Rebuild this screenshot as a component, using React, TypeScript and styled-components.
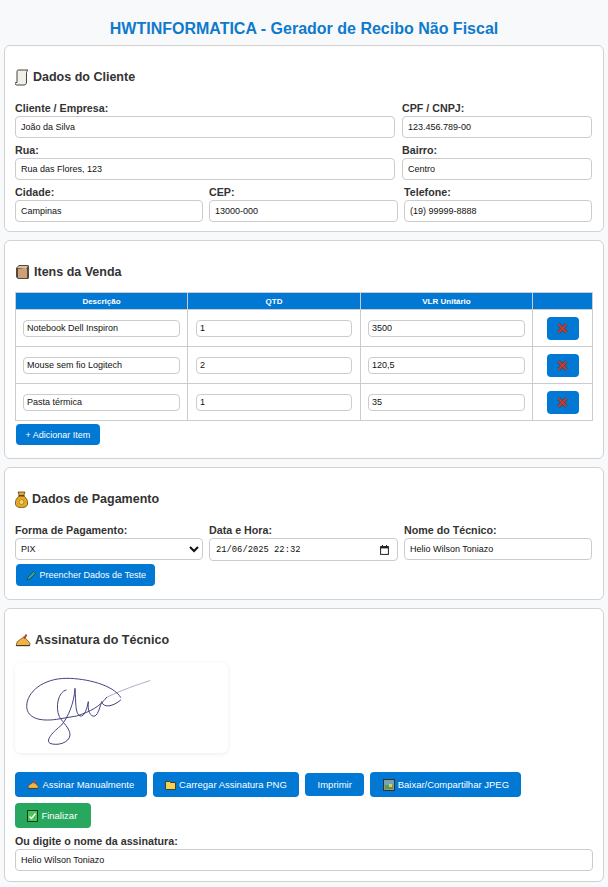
import React from 'react';
import styled, { createGlobalStyle } from 'styled-components';

const items = [
  { desc: 'Notebook Dell Inspiron', qtd: '1', valor: '3500' },
  { desc: 'Mouse sem fio Logitech', qtd: '2', valor: '120,5' },
  { desc: 'Pasta térmica', qtd: '1', valor: '35' },
];

const ScrollIcon = () => (
  <svg width="14" height="17" viewBox="0 0 14 17">
    <path d="M3 1h10c-1 1-1.500 2-1.500 3v9c0 2-1 3-2.500 3H1.500C.5 16 0 15 .5 13.500H2V3c0-1 .3-2 1-2z" fill="#f1efe6" stroke="#444" strokeWidth="1" />
  </svg>
);

const BoxIcon = () => (
  <svg width="15" height="16" viewBox="0 0 15 16">
    <path d="M1 4l3-3h9l1 1v12l-1 1H3l-2-2z" fill="#4f4a42" />
    <path d="M2 4l2-2h9l-2 3z" fill="#e2bd97" />
    <path d="M3 5h9v9H3z" fill="#cfa078" />
  </svg>
);

const BagIcon = () => (
  <svg width="13" height="17" viewBox="0 0 13 17">
    <path d="M3 1h7L8.500 5c3 1.500 4.500 5 4 8-.5 2.500-2 3.500-6 3.500s-5.500-1-6-3.500c-.5-3 1-6.500 4-8z" fill="#e8ab22" stroke="#5a4520" strokeWidth=".8" />
    <rect x="3.500" y="4" width="6" height="1.500" fill="#5a4520" />
    <circle cx="6.500" cy="11" r="2.500" fill="#f5d364" stroke="#8a6516" strokeWidth=".6" />
  </svg>
);

const HandIcon = ({ size = 16 }: { size?: number }) => (
  <svg width={size} height={size * 0.85} viewBox="0 0 16 14">
    <path d="M1 13l1-4 7-5 3 3 3 3v3z" fill="#f2b440" stroke="#6b4a16" strokeWidth=".8" />
    <path d="M8 5l3-4 1.500 1-2.500 4.500z" fill="#b9472d" />
    <path d="M1 13h14" stroke="#333" strokeWidth="1" />
  </svg>
);

const PencilIcon = () => (
  <svg width="11" height="11" viewBox="0 0 11 11">
    <path d="M1 10l1-3 5.500-5.500 2 2L4 9z" fill="#2fa39a" stroke="#1c3d45" strokeWidth=".7" />
  </svg>
);

const CrossIcon = () => (
  <svg width="11" height="11" viewBox="0 0 11 11">
    <path d="M1.500 1.500l8 8M9.500 1.500l-8 8" stroke="#3f4658" strokeWidth="3.400" />
    <path d="M1.500 1.500l8 8M9.500 1.500l-8 8" stroke="#c93c2c" strokeWidth="2" />
  </svg>
);

const FolderIcon = () => (
  <svg width="11" height="10" viewBox="0 0 11 10">
    <path d="M.5 1.500h4l1 1h5v7h-10z" fill="#f6d055" stroke="#3a3420" strokeWidth=".9" />
  </svg>
);

const PictureIcon = () => (
  <svg width="12" height="12" viewBox="0 0 12 12">
    <rect x=".5" y=".5" width="11" height="11" fill="#8f9a82" stroke="#333" />
    <rect x="2" y="2" width="8" height="4" fill="#6da5c9" />
    <rect x="2" y="6" width="8" height="4" fill="#5f9a4c" />
    <rect x="6" y="5" width="3" height="3" fill="#e3c86a" />
  </svg>
);

const CheckIcon = () => (
  <svg width="11" height="12" viewBox="0 0 11 12">
    <rect x=".5" y=".5" width="10" height="11" fill="#49c45a" stroke="#123c1c" />
    <path d="M2.500 6.500l2 2 4-5" fill="none" stroke="#fff" strokeWidth="1.300" />
  </svg>
);

const CalendarIcon = () => (
  <svg width="9" height="10" viewBox="0 0 9 10">
    <rect x=".6" y="1.600" width="7.800" height="7.800" fill="none" stroke="#222" strokeWidth="1" />
    <rect x=".6" y="1.600" width="7.800" height="1.800" fill="#222" />
    <path d="M2.500 0v2M6.500 0v2" stroke="#222" />
  </svg>
);

const Signature = () => (
  <svg width="213" height="90" viewBox="45 159 639 270">
    <g fill="none" stroke="#45437f" strokeWidth="3" strokeLinecap="round">
      <path d="M320 262C340 252 390 230 450 212" stroke="#9d9cc0" strokeWidth="2.500" />
      <path d="M362 262C340 225 260 205 200 205C130 205 80 245 80 290C82 325 120 335 170 328L230 318C270 305 300 290 320 262" />
      <path d="M198 240C175 245 165 290 178 320C190 340 210 355 210 375C208 400 170 408 150 400C135 390 160 365 185 345C205 320 222 280 225 235C228 280 225 310 240 318C255 322 262 290 265 275C262 300 270 322 285 318C295 312 300 290 305 275C310 295 340 290 362 270" />
    </g>
  </svg>
);

export default function App() {
  return (
    <>
      <GlobalStyle />
      <Page>
        <Title>HWTINFORMATICA - Gerador de Recibo Não Fiscal</Title>

        <Card $pad={9}>
          <CardTitle>
            <ScrollIcon /> Dados do Cliente
          </CardTitle>
          <TwoCols>
            <Field>
              <Label>Cliente / Empresa:</Label>
              <Input defaultValue="João da Silva" />
            </Field>
            <Field>
              <Label>CPF / CNPJ:</Label>
              <Input defaultValue="123.456.789-00" />
            </Field>
            <Field>
              <Label>Rua:</Label>
              <Input defaultValue="Rua das Flores, 123" />
            </Field>
            <Field>
              <Label>Bairro:</Label>
              <Input defaultValue="Centro" />
            </Field>
          </TwoCols>
          <ThreeCols>
            <Field>
              <Label>Cidade:</Label>
              <Input defaultValue="Campinas" />
            </Field>
            <Field>
              <Label>CEP:</Label>
              <Input defaultValue="13000-000" />
            </Field>
            <Field>
              <Label>Telefone:</Label>
              <Input defaultValue="(19) 99999-8888" />
            </Field>
          </ThreeCols>
        </Card>

        <Card>
          <CardTitle>
            <BoxIcon /> Itens da Venda
          </CardTitle>
          <Table>
            <colgroup>
              <col style={{ width: 172 }} />
              <col style={{ width: 173 }} />
              <col style={{ width: 172 }} />
              <col style={{ width: 60 }} />
            </colgroup>
            <thead>
              <tr>
                <Th>Descrição</Th>
                <Th>QTD</Th>
                <Th>VLR Unitário</Th>
                <Th />
              </tr>
            </thead>
            <tbody>
              {items.map(item => (
                <tr key={item.desc}>
                  <Td>
                    <CellInput defaultValue={item.desc} />
                  </Td>
                  <Td>
                    <CellInput defaultValue={item.qtd} />
                  </Td>
                  <Td>
                    <CellInput defaultValue={item.valor} />
                  </Td>
                  <Td>
                    <RemoveButton>
                      <CrossIcon />
                    </RemoveButton>
                  </Td>
                </tr>
              ))}
            </tbody>
          </Table>
          <Button>+ Adicionar Item</Button>
        </Card>

        <Card>
          <CardTitle>
            <BagIcon /> Dados de Pagamento
          </CardTitle>
          <ThreeCols>
            <Field>
              <Label>Forma de Pagamento:</Label>
              <Select defaultValue="PIX">
                <option value="PIX">PIX</option>
                <option value="Dinheiro">Dinheiro</option>
              </Select>
            </Field>
            <Field>
              <Label>Data e Hora:</Label>
              <DateField>
                <DateText defaultValue="21/06/2025 22:32" />
                <CalendarIcon />
              </DateField>
            </Field>
            <Field>
              <Label>Nome do Técnico:</Label>
              <Input defaultValue="Helio Wilson Toniazo" />
            </Field>
          </ThreeCols>
          <Button $h={22}>
            <PencilIcon /> Preencher Dados de Teste
          </Button>
        </Card>

        <Card>
          <CardTitle>
            <HandIcon /> Assinatura do Técnico
          </CardTitle>
          <SignatureBox>
            <Signature />
          </SignatureBox>
          <Actions>
            <ActionButton $h={25}>
              <HandIcon size={12} /> Assinar Manualmente
            </ActionButton>
            <ActionButton $h={25}>
              <FolderIcon /> Carregar Assinatura PNG
            </ActionButton>
            <ActionButton $h={23}>Imprimir</ActionButton>
            <ActionButton $h={25}>
              <PictureIcon /> Baixar/Compartilhar JPEG
            </ActionButton>
            <ActionButton $h={25} $green>
              <CheckIcon /> Finalizar
            </ActionButton>
          </Actions>
          <Field>
            <Label>Ou digite o nome da assinatura:</Label>
            <Input defaultValue="Helio Wilson Toniazo" />
          </Field>
        </Card>
      </Page>
    </>
  );
}

const GlobalStyle = createGlobalStyle`
  * {
    box-sizing: border-box;
  }
  html, body {
    margin: 0;
    padding: 0;
    background-color: #f8f9fa;
    font-family: 'Liberation Sans', Arial, sans-serif;
    color: #333333;
  }
`;

const Page = styled.div`
  width: 608px;
  padding: 0 4px 6px;
  display: flex;
  flex-direction: column;
  gap: 8px;
`;

const Title = styled.h1`
  margin: 0;
  height: 37px;
  padding-top: 19px;
  font-size: 16px;
  line-height: 19px;
  font-weight: bold;
  text-align: center;
  color: #0f7acb;
`;

const Card = styled.section<{ $pad?: number }>`
  display: flex;
  flex-direction: column;
  align-items: flex-start;
  background-color: #ffffff;
  border: 1px solid #d2d2d2;
  border-radius: 6px;
  padding: 21px 10px ${props => props.$pad ?? 10}px;
`;

const CardTitle = styled.h2`
  margin: 0 0 10px;
  display: flex;
  align-items: center;
  gap: 4px;
  height: 20px;
  font-size: 12.5px;
  font-weight: bold;
  color: #333333;
`;

const TwoCols = styled.div`
  display: grid;
  grid-template-columns: 380px 190px;
  column-gap: 7px;
  row-gap: 4px;
  margin: 3px 0 1px;
`;

const ThreeCols = styled.div`
  display: grid;
  grid-template-columns: 188px 189px 188px;
  column-gap: 6px;
  margin-top: 3px;
`;

const Field = styled.div`
  align-self: stretch;
  display: flex;
  flex-direction: column;
`;

const Label = styled.label`
  height: 16px;
  line-height: 16px;
  font-size: 10.7px;
  font-weight: bold;
  color: #333333;
`;

const Input = styled.input`
  width: 100%;
  height: 22px;
  padding: 0 5px;
  border: 1px solid #cccccc;
  border-radius: 4px;
  background: #ffffff;
  font-family: 'Liberation Sans', Arial, sans-serif;
  font-size: 9px;
  color: #111111;
  outline: none;
`;

const Select = styled.select`
  width: 100%;
  height: 22px;
  padding: 0 1px;
  border: 1px solid #cccccc;
  border-radius: 4px;
  background: #ffffff;
  font-family: 'Liberation Sans', Arial, sans-serif;
  font-size: 9px;
  color: #111111;
`;

const DateField = styled.div`
  display: flex;
  align-items: center;
  height: 23px;
  padding: 0 8px 0 6px;
  border: 1px solid #cccccc;
  border-radius: 4px;
  background: #ffffff;
`;

const DateText = styled.input`
  flex: 1;
  min-width: 0;
  padding: 0;
  border: 0;
  outline: none;
  background: transparent;
  font-family: 'Liberation Mono', monospace;
  font-size: 8.8px;
  color: #111111;
`;

const Table = styled.table`
  width: 577px;
  table-layout: fixed;
  border-collapse: collapse;
`;

const Th = styled.th`
  height: 17px;
  padding: 0;
  border: 1px solid #cccccc;
  background-color: #0078d4;
  color: #ffffff;
  font-size: 8px;
  font-weight: bold;
`;

const Td = styled.td`
  height: 37px;
  padding: 0 7px;
  border: 1px solid #cccccc;
  text-align: center;

  &:nth-child(2) {
    padding: 0 8px;
  }
`;

const CellInput = styled.input`
  display: block;
  width: 100%;
  height: 17px;
  padding: 0 3px;
  border: 1px solid #cccccc;
  border-radius: 4px;
  font-family: 'Liberation Sans', Arial, sans-serif;
  font-size: 9px;
  color: #111111;
  outline: none;
`;

const RemoveButton = styled.button`
  width: 32px;
  height: 23px;
  padding: 0;
  border: 0;
  border-radius: 4px;
  background-color: #0078d4;
  display: inline-flex;
  align-items: center;
  justify-content: center;
  vertical-align: middle;
`;

const Button = styled.button<{ $green?: boolean; $h?: number }>`
  display: inline-flex;
  align-items: center;
  gap: 3px;
  height: ${props => props.$h ?? 21}px;
  margin: 3px 1px;
  padding: 0 9.5px;
  border: 0;
  border-radius: 4px;
  background-color: ${props => (props.$green ? '#28a85e' : '#0078d4')};
  color: #ffffff;
  font-family: 'Liberation Sans', Arial, sans-serif;
  font-size: 9px;
`;

const ActionButton = styled(Button)`
  margin: 0;
  padding: 0 ${props => (props.$green ? 14 : 12.4)}px 0 12.4px;
  font-size: 9.5px;
`;

const Actions = styled.div`
  align-self: stretch;
  display: flex;
  flex-wrap: wrap;
  align-items: center;
  gap: 6px;
  margin-bottom: 5px;
`;

const SignatureBox = styled.div`
  width: 213px;
  height: 90px;
  margin: 3px 0 19px;
  border-radius: 6px;
  background: #ffffff;
  box-shadow: 0 1px 4px rgba(0, 0, 0, 0.08);
`;
